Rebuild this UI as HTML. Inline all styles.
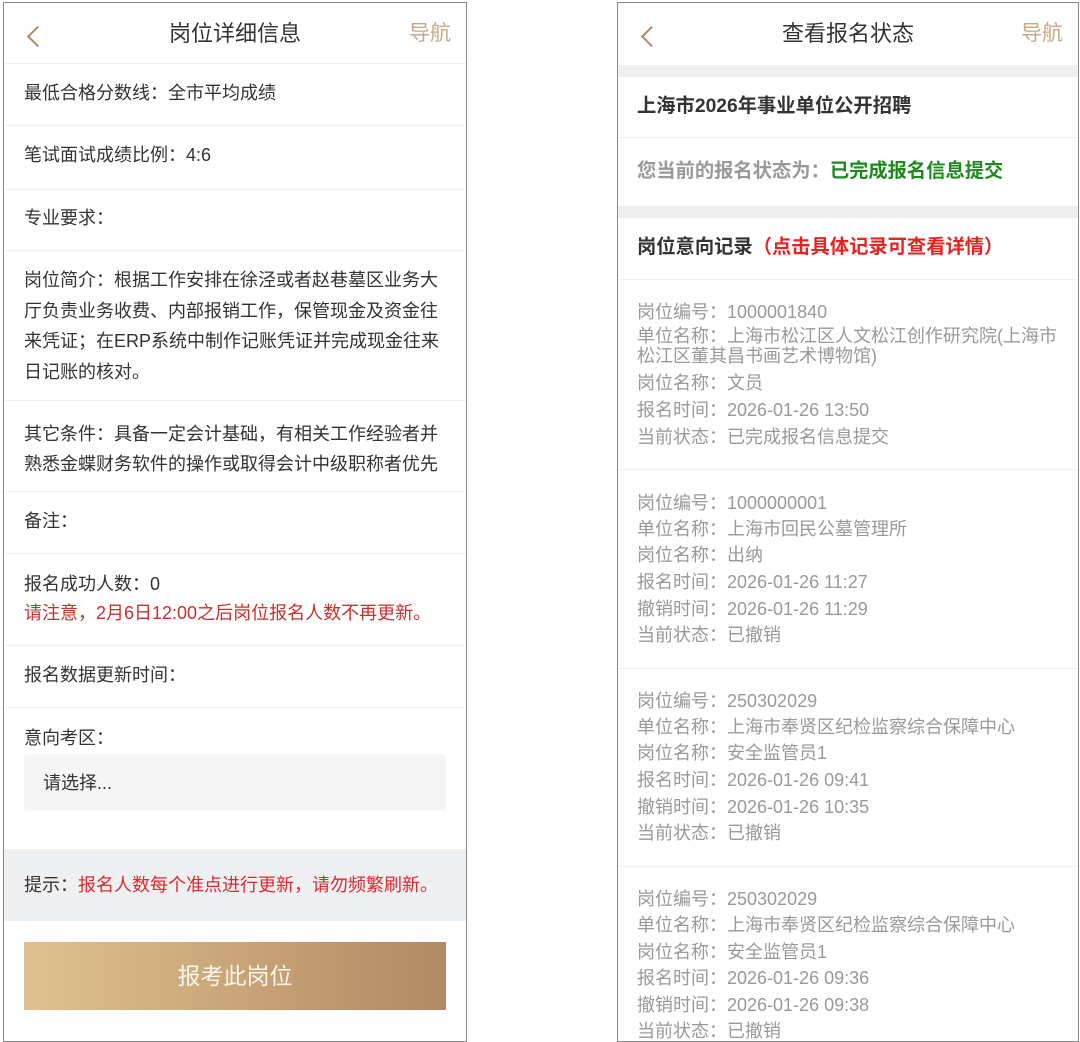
<!DOCTYPE html>
<html><head><meta charset="utf-8"><style>
*{margin:0;padding:0;box-sizing:border-box}
body{width:1080px;height:1028px;background:#fff;position:relative;overflow:hidden;font-family:"Liberation Sans","Noto Sans CJK SC",sans-serif;font-size:18px;color:#333}
.p{position:absolute;top:2px;height:1040px;border:1px solid #888;background:#fff;overflow:hidden}
.t{position:absolute;white-space:nowrap;line-height:24px}
.hl{position:absolute;left:0;right:0;height:1px;background:#f0f0f0}
.g{color:#999}
.back{position:absolute;width:15px;height:15px;border-left:2.5px solid #b08a63;border-bottom:2.5px solid #b08a63;transform:rotate(45deg)}
</style></head><body>
<div class="p" style="left:3px;width:464px">
  <div class="back" style="left:26px;top:26px"></div>
  <div class="t" style="left:0;right:0;text-align:center;top:19px;font-size:22px;color:#333">岗位详细信息</div>
  <div class="t" style="left:405px;top:19px;font-size:21px;color:#c9a882">导航</div>
  <div class="hl" style="top:60px"></div>
  <div class="t" style="left:20px;top:78px">最低合格分数线：全市平均成绩</div>
  <div class="hl" style="top:122px"></div>
  <div class="t" style="left:20px;top:140px">笔试面试成绩比例：4:6</div>
  <div class="hl" style="top:186px"></div>
  <div class="t" style="left:20px;top:203px">专业要求：</div>
  <div class="hl" style="top:247px"></div>
  <div class="t" style="left:20px;top:262px;line-height:30.5px;white-space:normal;width:425px">岗位简介：根据工作安排在徐泾或者赵巷墓区业务大厅负责业务收费、内部报销工作，保管现金及资金往来凭证；在ERP系统中制作记账凭证并完成现金往来日记账的核对。</div>
  <div class="hl" style="top:397px"></div>
  <div class="t" style="left:20px;top:416px;line-height:30px;white-space:normal;width:425px">其它条件：具备一定会计基础，有相关工作经验者并熟悉金蝶财务软件的操作或取得会计中级职称者优先</div>
  <div class="hl" style="top:488px"></div>
  <div class="t" style="left:20px;top:506px">备注：</div>
  <div class="hl" style="top:550px"></div>
  <div class="t" style="left:20px;top:569px">报名成功人数：0</div>
  <div class="t" style="left:20px;top:598px;color:#c9302c">请注意，2月6日12:00之后岗位报名人数不再更新。</div>
  <div class="hl" style="top:642px"></div>
  <div class="t" style="left:20px;top:660px">报名数据更新时间：</div>
  <div class="hl" style="top:704px"></div>
  <div class="t" style="left:20px;top:723px">意向考区：</div>
  <div style="position:absolute;left:20px;top:751px;width:422px;height:57px;background:#f5f5f5;border-radius:3px"></div>
  <div class="t" style="left:39px;top:768px">请选择...</div>
  <div style="position:absolute;left:0;right:0;top:846px;height:72px;background:#eff0f2"></div>
  <div class="t" style="left:20px;top:870px">提示：<span style="color:#e0282e">报名人数每个准点进行更新，请勿频繁刷新。</span></div>
  <div style="position:absolute;left:20px;top:939px;width:422px;height:68px;background:linear-gradient(90deg,#dfc28f,#c9a577 50%,#b08a63);text-align:center;line-height:68px;font-size:23px;color:#fbf5ec">报考此岗位</div>
</div>
<div class="p" style="left:617px;width:462px">
  <div class="back" style="left:26px;top:26px"></div>
  <div class="t" style="left:0;right:0;text-align:center;top:19px;font-size:22px;color:#333">查看报名状态</div>
  <div class="t" style="left:403px;top:19px;font-size:21px;color:#c9a882">导航</div>
  <div style="position:absolute;left:0;right:0;top:62px;height:12px;background:#efefef"></div>
  <div class="t" style="left:19px;top:92px;font-weight:bold;font-size:19.3px;color:#333">上海市2026年事业单位公开招聘</div>
  <div class="hl" style="top:134px"></div>
  <div class="t" style="left:19px;top:157px;font-weight:bold;font-size:19.3px;color:#999">您当前的报名状态为：<span style="color:#1e8a1e">已完成报名信息提交</span></div>
  <div style="position:absolute;left:0;right:0;top:203px;height:12px;background:#efefef"></div>
  <div class="t" style="left:19px;top:233px;font-weight:bold;font-size:19.3px;color:#333">岗位意向记录<span style="color:#e62222">（点击具体记录可查看详情）</span></div>
  <div class="hl" style="top:276px"></div>
  <div class="g">
    <div class="t" style="left:19px;top:297px">岗位编号：1000001840</div>
    <div class="t" style="left:19px;top:323px;line-height:20px;white-space:normal;width:430px">单位名称：上海市松江区人文松江创作研究院(上海市松江区董其昌书画艺术博物馆)</div>
    <div class="t" style="left:19px;top:368px">岗位名称：文员</div>
    <div class="t" style="left:19px;top:395px">报名时间：2026-01-26 13:50</div>
    <div class="t" style="left:19px;top:422px">当前状态：已完成报名信息提交</div>
    <div class="hl" style="top:466px"></div>
    <div class="t" style="left:19px;top:488px">岗位编号：1000000001</div>
    <div class="t" style="left:19px;top:514px">单位名称：上海市回民公墓管理所</div>
    <div class="t" style="left:19px;top:540px">岗位名称：出纳</div>
    <div class="t" style="left:19px;top:567px">报名时间：2026-01-26 11:27</div>
    <div class="t" style="left:19px;top:594px">撤销时间：2026-01-26 11:29</div>
    <div class="t" style="left:19px;top:620px">当前状态：已撤销</div>
    <div class="hl" style="top:665px"></div>
    <div class="t" style="left:19px;top:686px">岗位编号：250302029</div>
    <div class="t" style="left:19px;top:712px">单位名称：上海市奉贤区纪检监察综合保障中心</div>
    <div class="t" style="left:19px;top:738px">岗位名称：安全监管员1</div>
    <div class="t" style="left:19px;top:765px">报名时间：2026-01-26 09:41</div>
    <div class="t" style="left:19px;top:792px">撤销时间：2026-01-26 10:35</div>
    <div class="t" style="left:19px;top:818px">当前状态：已撤销</div>
    <div class="hl" style="top:863px"></div>
    <div class="t" style="left:19px;top:884px">岗位编号：250302029</div>
    <div class="t" style="left:19px;top:910px">单位名称：上海市奉贤区纪检监察综合保障中心</div>
    <div class="t" style="left:19px;top:937px">岗位名称：安全监管员1</div>
    <div class="t" style="left:19px;top:963px">报名时间：2026-01-26 09:36</div>
    <div class="t" style="left:19px;top:990px">撤销时间：2026-01-26 09:38</div>
    <div class="t" style="left:19px;top:1016px">当前状态：已撤销</div>
  </div>
</div>
</body></html>
